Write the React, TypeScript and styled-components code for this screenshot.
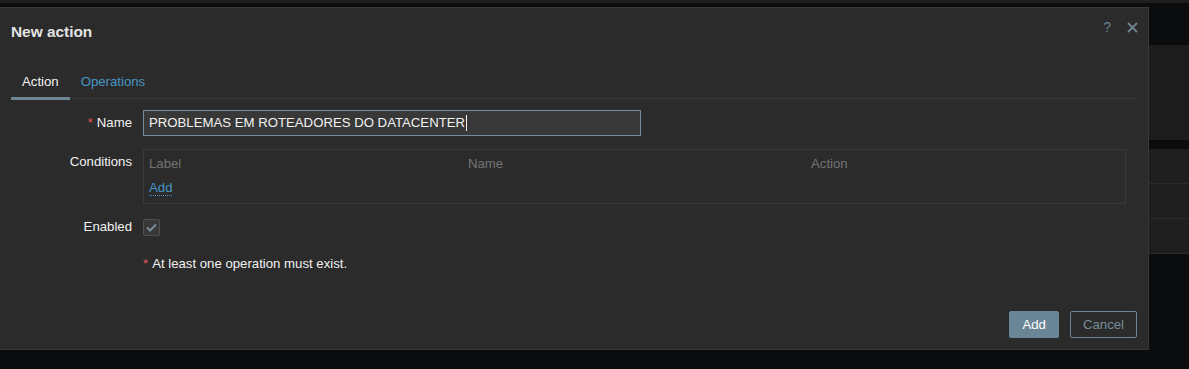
import React from 'react';
import styled, { createGlobalStyle } from 'styled-components';

const GlobalStyle = createGlobalStyle`
  html, body {
    margin: 0;
    padding: 0;
    background: #0b0c0e;
    font-family: "Liberation Sans", Arial, sans-serif;
    font-size: 13.2px;
    color: #f2f2f2;
  }
`

const Page = styled.div`
  position: relative;
  width: 1189px;
  height: 369px;
  overflow: hidden;
  background: #0b0c0e;
`

const TopStrip = styled.div`
  height: 3px;
  background: #1e1e1e;
`

const PageBody = styled.div`
  padding: 42px 0 0 40px;
  display: flex;
  flex-direction: column;
`

const Widget = styled.div`
  height: 95px;
  background: #1c1c1c;
  margin-bottom: 9px;
`

const TableRow = styled.div`
  height: 34px;
  background: #1e1e1e;
  border-bottom: 1px solid #2a2a2a;
`

const Dialog = styled.div`
  position: absolute;
  left: -1px;
  top: 7px;
  width: 1150px;
  height: 343px;
  box-sizing: border-box;
  background: #2b2b2b;
  border: 1px solid #383838;
  display: flex;
  flex-direction: column;
`

const Header = styled.div`
  display: flex;
  align-items: center;
  padding: 13px 10px 0 11px;
  height: 22px;
`

const Title = styled.h4`
  margin: 0;
  flex: 1;
  font-size: 15.4px;
  font-weight: bold;
  color: #e4e4e4;
`

const HeaderIcons = styled.div`
  display: flex;
  align-items: center;
  gap: 16px;
  margin-top: -10px;
`

const HelpMark = styled.span`
  color: #6c8290;
  font-size: 14px;
  line-height: 14px;
`

const Body = styled.div`
  flex: 1;
  padding: 0 11px;
  display: flex;
  flex-direction: column;
`

const Tabs = styled.div`
  display: flex;
  margin-top: 23px;
  border-bottom: 1px solid #383838;
`

const Tab = styled.div<{ $active?: boolean }>`
  padding: 0 11px;
  height: 34px;
  line-height: 31px;
  box-sizing: border-box;
  color: ${p => (p.$active ? '#f2f2f2' : '#4796c4')};
  border-bottom: 3px solid ${p => (p.$active ? '#6e8694' : 'transparent')};
  margin-bottom: -2px;
`

const Form = styled.div`
  display: grid;
  grid-template-columns: 121px 983px;
  column-gap: 11px;
  row-gap: 13px;
  margin-top: 11px;
`

const Label = styled.label<{ $top?: boolean; $shift?: number }>`
  text-align: right;
  color: #f2f2f2;
  align-self: ${p => (p.$top ? 'start' : 'center')};
  padding-top: ${p => (p.$top ? '5px' : '0')};
  margin-top: ${p => p.$shift ?? 0}px;
`

const Asterisk = styled.span`
  color: #e45959;
  margin-right: 4px;
`

const TextInput = styled.div`
  width: 498px;
  height: 26px;
  box-sizing: border-box;
  background: #383838;
  border: 1px solid #768d99;
  padding: 0 5px;
  line-height: 24px;
  color: #f2f2f2;
  display: flex;
  align-items: center;
`

const Caret = styled.span`
  display: inline-block;
  width: 1px;
  height: 16px;
  background: #f2f2f2;
  margin-left: 1px;
`

const CondBox = styled.div`
  height: 55px;
  box-sizing: border-box;
  border: 1px solid #383838;
  padding: 5px 5px 0 5px;
`

const CondHead = styled.div`
  display: grid;
  grid-template-columns: 319px 343px 1fr;
  color: #737373;
  height: 18px;
  line-height: 18px;
`

const AddLink = styled.span`
  display: inline-block;
  margin-top: 7px;
  color: #4796c4;
  border-bottom: 1px dotted #4796c4;
  line-height: 15px;
`

const CheckRow = styled.div`
  height: 24px;
  margin-top: -2px;
  display: flex;
  align-items: center;
`

const CheckBox = styled.div`
  width: 17px;
  height: 17px;
  box-sizing: border-box;
  background: #383838;
  border: 1px solid #4f4f4f;
  border-radius: 2px;
  display: flex;
  align-items: center;
  justify-content: center;
`

const Note = styled.div`
  grid-column: 2;
  height: 24px;
  line-height: 24px;
  color: #f2f2f2;
`

const Footer = styled.div`
  display: flex;
  justify-content: flex-end;
  gap: 11px;
  padding: 0 11px 11px 0;
`

const Button = styled.button<{ $primary?: boolean }>`
  font-family: inherit;
  font-size: 13.2px;
  height: 27px;
  padding: 0 12px;
  border-radius: 2px;
  cursor: pointer;
  background: ${p => (p.$primary ? '#6a8595' : 'transparent')};
  border: 1px solid ${p => (p.$primary ? '#6a8595' : '#6e8694')};
  color: ${p => (p.$primary ? '#ffffff' : '#768d99')};
`

export default function App() {
  return (
    <>
      <GlobalStyle />
      <Page>
        <TopStrip />
        <PageBody>
          <Widget />
          <TableRow />
          <TableRow />
          <TableRow />
        </PageBody>

        <Dialog>
          <Header>
            <Title>New action</Title>
            <HeaderIcons>
              <HelpMark>?</HelpMark>
              <svg width="11" height="11" viewBox="0 0 11 11">
                <path d="M1 1 L10 10 M10 1 L1 10" stroke="#6c8290" strokeWidth="1.8" />
              </svg>
            </HeaderIcons>
          </Header>

          <Body>
            <Tabs>
              <Tab $active>Action</Tab>
              <Tab>Operations</Tab>
            </Tabs>

            <Form>
              <Label $shift={-1}><Asterisk>*</Asterisk>Name</Label>
              <TextInput>
                PROBLEMAS EM ROTEADORES DO DATACENTER<Caret />
              </TextInput>

              <Label $top>Conditions</Label>
              <CondBox>
                <CondHead>
                  <span>Label</span>
                  <span>Name</span>
                  <span>Action</span>
                </CondHead>
                <AddLink>Add</AddLink>
              </CondBox>

              <Label $shift={-3}>Enabled</Label>
              <CheckRow>
                <CheckBox>
                  <svg width="11" height="9" viewBox="0 0 11 9">
                    <path d="M1 4.5 L4 7.5 L10 1.5" stroke="#768d99" strokeWidth="2" fill="none" />
                  </svg>
                </CheckBox>
              </CheckRow>

              <Note><Asterisk>*</Asterisk>At least one operation must exist.</Note>
            </Form>
          </Body>

          <Footer>
            <Button $primary>Add</Button>
            <Button>Cancel</Button>
          </Footer>
        </Dialog>
      </Page>
    </>
  );
}
